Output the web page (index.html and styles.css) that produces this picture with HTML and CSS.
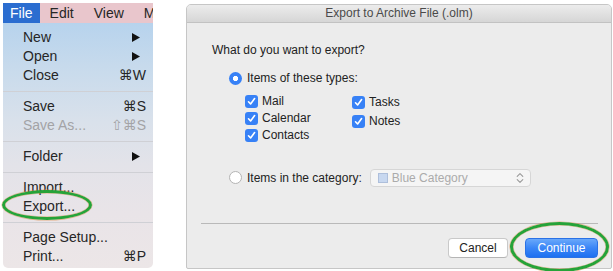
FILE: index.html
```html
<!DOCTYPE html>
<html>
<head>
<meta charset="utf-8">
<link rel="stylesheet" href="styles.css">
</head>
<body>
<div class="screen">
  <div class="menu-wrap">
    <div class="menubar">
      <span class="mb-item active">File</span>
      <span class="mb-item">Edit</span>
      <span class="mb-item">View</span>
      <span class="mb-item">M</span>
    </div>
    <div class="dropdown">
      <div class="item"><span>New</span><svg class="arrow" width="8" height="9" viewBox="0 0 8 9"><polygon points="0,0 8,4.5 0,9" fill="#111"/></svg></div>
      <div class="item"><span>Open</span><svg class="arrow" width="8" height="9" viewBox="0 0 8 9"><polygon points="0,0 8,4.5 0,9" fill="#111"/></svg></div>
      <div class="item"><span>Close</span><span class="key">⌘W</span></div>
      <div class="sep"></div>
      <div class="item"><span>Save</span><span class="key">⌘S</span></div>
      <div class="item disabled"><span>Save As...</span><span class="key">⇧⌘S</span></div>
      <div class="sep"></div>
      <div class="item"><span>Folder</span><svg class="arrow" width="8" height="9" viewBox="0 0 8 9"><polygon points="0,0 8,4.5 0,9" fill="#111"/></svg></div>
      <div class="sep"></div>
      <div class="item"><span>Import...</span></div>
      <div class="item"><span>Export...</span></div>
      <div class="sep"></div>
      <div class="item"><span>Page Setup...</span></div>
      <div class="item"><span>Print...</span><span class="key">⌘P</span></div>
    </div>
  </div>

  <div class="dialog">
    <div class="titlebar">Export to Archive File (.olm)</div>
    <div class="content">
      <div class="question">What do you want to export?</div>
      <div class="radio-row first">
        <span class="radio on"></span>
        <span>Items of these types:</span>
      </div>
      <div class="checks">
        <div class="col left">
          <div class="check-row"><span class="cb"><svg width="13" height="13" viewBox="0 0 13 13"><path d="M3.5 6.8 L5.6 9 L9.6 3.6" fill="none" stroke="#fff" stroke-width="1.6" stroke-linecap="round" stroke-linejoin="round"/></svg></span><span>Mail</span></div>
          <div class="check-row"><span class="cb"><svg width="13" height="13" viewBox="0 0 13 13"><path d="M3.5 6.8 L5.6 9 L9.6 3.6" fill="none" stroke="#fff" stroke-width="1.6" stroke-linecap="round" stroke-linejoin="round"/></svg></span><span>Calendar</span></div>
          <div class="check-row"><span class="cb"><svg width="13" height="13" viewBox="0 0 13 13"><path d="M3.5 6.8 L5.6 9 L9.6 3.6" fill="none" stroke="#fff" stroke-width="1.6" stroke-linecap="round" stroke-linejoin="round"/></svg></span><span>Contacts</span></div>
        </div>
        <div class="col right">
          <div class="check-row tall"><span class="cb"><svg width="13" height="13" viewBox="0 0 13 13"><path d="M3.5 6.8 L5.6 9 L9.6 3.6" fill="none" stroke="#fff" stroke-width="1.6" stroke-linecap="round" stroke-linejoin="round"/></svg></span><span>Tasks</span></div>
          <div class="check-row tall"><span class="cb"><svg width="13" height="13" viewBox="0 0 13 13"><path d="M3.5 6.8 L5.6 9 L9.6 3.6" fill="none" stroke="#fff" stroke-width="1.6" stroke-linecap="round" stroke-linejoin="round"/></svg></span><span>Notes</span></div>
        </div>
      </div>
      <div class="radio-row second">
        <span class="radio"></span>
        <span>Items in the category:</span>
        <div class="select">
          <span class="swatch"></span>
          <span class="sel-text">Blue Category</span>
          <svg class="chev" width="8" height="12" viewBox="0 0 8 12"><path d="M1.2 4.4 L4 1.6 L6.8 4.4 M1.2 7.6 L4 10.4 L6.8 7.6" fill="none" stroke="#9a9a9a" stroke-width="1.1" stroke-linecap="round" stroke-linejoin="round"/></svg>
        </div>
      </div>
    </div>
    <div class="footer">
      <div class="footer-line"></div>
      <div class="buttons">
        <button class="btn cancel">Cancel</button>
        <button class="btn primary">Continue</button>
      </div>
    </div>
  </div>
</div>
<div class="ring ring-export"></div>
<div class="ring ring-continue"></div>
</body>
</html>
```

FILE: styles.css
```css
html, body {
  margin: 0;
  padding: 0;
  background: #ffffff;
}
body {
  position: relative;
  width: 613px;
  height: 271px;
  overflow: hidden;
  font-family: "Liberation Sans", "DejaVu Sans", sans-serif;
  color: #222;
}
.screen {
  display: flex;
  align-items: flex-start;
}

/* ---------- Menu ---------- */
.menu-wrap {
  margin: 3px 0 0 3px;
  width: 150px;
}
.menubar {
  display: flex;
  height: 20px;
  line-height: 20px;
  background: #e9c6cc;
  font-size: 14px;
  overflow: hidden;
  white-space: nowrap;
}
.mb-item {
  padding: 0 10px;
  color: #262626;
}
.mb-item.active {
  padding: 0 7px;
  background: #2b6dd0;
  color: #fff;
}
.dropdown {
  height: 245px;
  box-sizing: border-box;
  padding: 5px 0 2px;
  background: linear-gradient(180deg, #b7d3ed 0%, #c9dbec 20%, #d9e1eb 40%, #e3e3e9 58%, #e9e4e8 78%, #ece6e7 100%);
  border-radius: 0 0 5px 5px;
  font-size: 14px;
}
.item {
  display: flex;
  justify-content: space-between;
  align-items: center;
  height: 19px;
  line-height: 19px;
  padding: 0 7px 0 20px;
  color: #262626;
}
.item.disabled {
  color: #a3a3a6;
}
.key {
  font-family: "Liberation Sans", "DejaVu Sans", sans-serif;
  letter-spacing: 0;
}
.arrow {
  margin-right: 6px;
}
.sep {
  height: 12px;
  display: flex;
  align-items: center;
}
.sep::before {
  content: "";
  display: block;
  width: 100%;
  height: 1px;
  background: #cfd0d5;
}

/* ---------- Dialog ---------- */
.dialog {
  margin: 4px 0 0 33px;
  width: 426px;
  height: 265px;
  box-sizing: border-box;
  border: 1px solid #c6c6c6;
  border-radius: 5px 5px 2px 2px;
  background: #ececec;
  display: flex;
  flex-direction: column;
  font-size: 12px;
  overflow: hidden;
}
.titlebar {
  height: 17px;
  line-height: 17px;
  text-align: center;
  color: #4a4a4a;
  background: linear-gradient(180deg, #ececec 0%, #d6d6d6 100%);
  border-bottom: 1px solid #c2c2c2;
}
.content {
  flex: 1;
  padding: 19px 0 0 25px;
}
.question {
  line-height: 16px;
  color: #222;
}
.radio-row {
  display: flex;
  align-items: center;
  height: 16px;
  line-height: 16px;
  margin-left: 17px;
}
.radio-row.first {
  margin-top: 12px;
}
.radio-row.second {
  margin-top: 24px;
  height: 19px;
}
.radio {
  width: 13px;
  height: 13px;
  box-sizing: border-box;
  border-radius: 50%;
  border: 1px solid #b4b4b4;
  background: #fff;
  margin-right: 5px;
  flex: none;
}
.radio.on {
  border: none;
  background: radial-gradient(circle, #fff 0 2.4px, #3781f6 2.9px);
}
.checks {
  display: flex;
  margin: 7px 0 0 33px;
}
.col.left {
  width: 107px;
}
.check-row {
  display: flex;
  align-items: center;
  height: 17px;
  line-height: 17px;
}
.check-row.tall {
  height: 19px;
}
.cb {
  width: 13px;
  height: 13px;
  border-radius: 3px;
  background: #3781f6;
  margin-right: 4px;
  flex: none;
  display: flex;
}
.select {
  display: flex;
  align-items: center;
  margin-left: 8px;
  width: 161px;
  height: 18px;
  box-sizing: border-box;
  border: 1px solid #d6d6d6;
  border-radius: 4px;
  background: #f5f5f5;
  padding: 0 6px 0 7px;
}
.swatch {
  width: 10px;
  height: 10px;
  box-sizing: border-box;
  background: #c8d8f0;
  border: 1px solid #aebfdb;
  margin-right: 4px;
}
.sel-text {
  flex: 1;
  color: #ababab;
}
.footer {
  padding-bottom: 10px;
}
.footer-line {
  height: 1px;
  margin: 0 13px 0 14px;
  background: #b9b9b9;
}
.buttons {
  display: flex;
  justify-content: flex-end;
  gap: 17px;
  padding: 14px 13px 0 0;
}
.btn {
  height: 20px;
  box-sizing: border-box;
  border-radius: 4px;
  font-family: "Liberation Sans", sans-serif;
  font-size: 12px;
  padding: 0;
  line-height: 18px;
}
.btn.cancel {
  width: 60px;
  background: #fff;
  color: #222;
  border: 1px solid #c9c9c9;
  border-bottom-color: #b5b5b5;
}
.btn.primary {
  width: 73px;
  color: #fff;
  border: 1px solid #2a72e6;
  background: linear-gradient(180deg, #69a8fa 0%, #3a86f7 50%, #1e70f0 100%);
}

/* ---------- Annotation rings ---------- */
.ring {
  position: absolute;
  box-sizing: border-box;
  border: 3px solid #26a338;
  border-radius: 50%;
  box-shadow: 0 0 0 0.6px rgba(230, 140, 70, 0.6), inset 0 0 0 0.6px rgba(230, 140, 70, 0.6);
}
.ring-export {
  left: 2px;
  top: 190px;
  width: 90px;
  height: 30px;
}
.ring-continue {
  left: 510px;
  top: 222px;
  width: 99px;
  height: 50px;
}
```
